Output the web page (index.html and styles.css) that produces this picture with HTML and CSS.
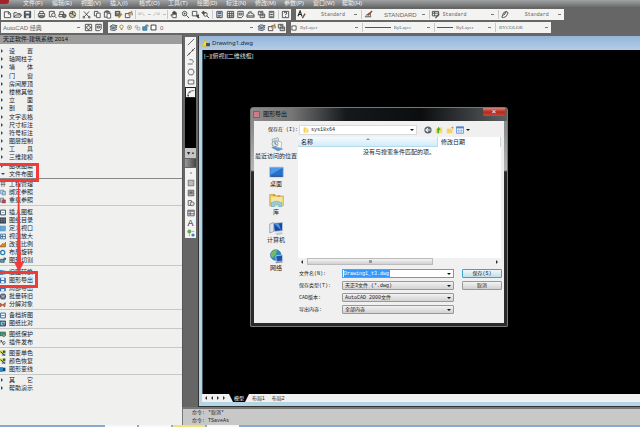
FILE: index.html
```
<!DOCTYPE html>
<html lang="zh-CN">
<head>
<meta charset="utf-8">
<title>天正软件-建筑系统 2014</title>
<link rel="stylesheet" href="styles.css">
</head>
<body>
<svg class="sprites" aria-hidden="true">
  <symbol id="new" viewBox="0 0 10 10"><path d="M1.5 2h5l2 2v4.500h-7zM6 2v2.500h2.500" class="k"/></symbol>
  <symbol id="open" viewBox="0 0 10 10"><path d="M1 8V3h3l1 1h3v1.500M1 8l2-2.500h6.500L8 8z" class="k"/></symbol>
  <symbol id="save" viewBox="0 0 10 10"><path d="M1.500 1.500h7v7h-7z" fill="#4c5a66" stroke="#38434c"/><path d="M3 2h4v2H3zM3.500 6h3v2.500h-3z" fill="#f4f4f4"/></symbol>
  <symbol id="print" viewBox="0 0 10 10"><path d="M3 4V1.500h4V4M1.500 4h7v3.500h-7zM3 6h4v2.500H3z" class="k"/></symbol>
  <symbol id="preview" viewBox="0 0 10 10"><path d="M7 3.500V1.500H1.500v6H4" class="k"/><circle cx="6" cy="5.500" r="2" class="k"/><path d="M7.500 7l2 2" class="k"/></symbol>
  <symbol id="publish" viewBox="0 0 10 10"><path d="M2 5V2h4v3M1 5h6v2.500H1z" class="k"/><circle cx="7" cy="6.500" r="2" fill="#6f7a80" stroke="#444"/></symbol>
  <symbol id="globe" viewBox="0 0 10 10"><circle cx="5" cy="5" r="3.500" fill="#d8c79a" stroke="#555"/><path d="M5 1.500V5l3 1.500M2 4h3" class="k"/></symbol>
  <symbol id="cut" viewBox="0 0 10 10"><path d="M2 1.500l5.500 6M8 1.500l-5.500 6" class="k"/><circle cx="2" cy="8" r="1" class="k"/><circle cx="8" cy="8" r="1" class="k"/></symbol>
  <symbol id="copy" viewBox="0 0 10 10"><path d="M1.500 1.500h4v5h-4z" class="k"/><path d="M4 3.500h4v5H4z" fill="#fff" stroke="#555"/></symbol>
  <symbol id="paste" viewBox="0 0 10 10"><path d="M1.500 2h6v6h-6zM3 1h3v1.500H3z" class="k"/><path d="M4.500 4h4v5h-4z" fill="#fff" stroke="#555"/></symbol>
  <symbol id="match" viewBox="0 0 10 10"><path d="M1.500 1.500h5v5h-5z" fill="#777" stroke="#444"/><path d="M3 3h2M9 3L5 8" stroke="#eee"/><path d="M8.500 4L5 8.500" stroke="#b07b33" stroke-width="2"/></symbol>
  <symbol id="block" viewBox="0 0 10 10"><path d="M1.500 4h5v4.500h-5zM5 3h4v3" class="k"/><path d="M9 1L5 6" stroke="#c98c43" stroke-width="1.500"/></symbol>
  <symbol id="undo" viewBox="0 0 10 10"><path d="M2 5c2-3 6-2 6 2M2 2.500V5h3" fill="none" stroke="#c4c4c4"/></symbol>
  <symbol id="redo" viewBox="0 0 10 10"><path d="M8 5C6 2 2 3 2 7M8 2.500V5H5" fill="none" stroke="#c4c4c4"/></symbol>
  <symbol id="pan" viewBox="0 0 10 10"><path d="M3 8.500L1 5.500l1-.5 1 1V2.500h1V5 1.500h1V5 2h1v3-2h1v4L7 8.500z" class="k"/></symbol>
  <symbol id="zoom" viewBox="0 0 10 10"><circle cx="4" cy="4" r="2.500" class="k"/><path d="M6 6l3 3M4 3v2M3 4h2" class="k"/></symbol>
  <symbol id="zoomwin" viewBox="0 0 10 10"><path d="M1.500 1.500h5v5h-5z" class="k"/><path d="M6 6l3 3M8 5v2" stroke="#333" stroke-width="1.500"/></symbol>
  <symbol id="zoomprev" viewBox="0 0 10 10"><circle cx="5" cy="5" r="2" class="k"/><path d="M6.500 6.500L9 9M1 3l2-2v4zM3 3h3" fill="#555" stroke="#444"/></symbol>
  <symbol id="props" viewBox="0 0 10 10"><path d="M2 1.500h6v7H2z" fill="#dbe6f0" stroke="#445"/><path d="M3 2.500h4v2H3z" fill="#40668e"/><path d="M3 6h4M3 7.500h3" stroke="#555"/></symbol>
  <symbol id="grid" viewBox="0 0 10 10"><path d="M1.500 1.500h7v7h-7zM1.500 4h7M1.500 6.500h7M4 1.500v7M6.500 1.500v7" class="k"/></symbol>
  <symbol id="palette" viewBox="0 0 10 10"><path d="M2 1.500h6v5l-2 2H2zM3.500 3.500h3v2h-3z" class="k"/></symbol>
  <symbol id="sheets" viewBox="0 0 10 10"><path d="M1 5l4-2 4 2v3H1zM2 3l3-1.500L7 3M1 6.500h8" class="k"/></symbol>
  <symbol id="markup" viewBox="0 0 10 10"><path d="M1.500 1.500h5v4h-5zM3.500 4.500h5v4h-5zM3 3h3M5 6.500h3" class="k"/></symbol>
  <symbol id="calc" viewBox="0 0 10 10"><path d="M2.500 1.500h5v7h-5zM3.500 3h3M3.500 5h3M3.500 7h3" class="k"/></symbol>
  <symbol id="help" viewBox="0 0 10 10"><path d="M1.500 1.500h7v7h-7z" class="k"/><path d="M3.500 3.500c0-1.500 3-1.500 3 0 0 1-1.500 1-1.500 2M5 6.500v1" fill="none" stroke="#222"/></symbol>
  <symbol id="textstyle" viewBox="0 0 10 10"><path d="M1 7L3.500 1l2 6M2 5h3" fill="none" stroke="#222" stroke-width="1.200"/><path d="M9 4L6 9" stroke="#7b4a2c" stroke-width="1.500"/></symbol>
  <symbol id="dimstyle" viewBox="0 0 10 10"><path d="M1 7.500h7M2 6l5-3v4" class="k"/><path d="M9 1L4 6" stroke="#8c4b2e" stroke-width="1.500"/></symbol>
  <symbol id="tablestyle" viewBox="0 0 10 10"><path d="M1.500 1.500h7v5h-7zM1.500 3.500h7M4 1.500v5" class="k"/><path d="M9 4L5 9" stroke="#665a3c" stroke-width="1.500"/></symbol>
  <symbol id="leader" viewBox="0 0 10 10"><path d="M2 8l2-5 3-1.500L9 3 7 7 4 8.500z" class="k"/><path d="M4 6l3-4" stroke="#222"/></symbol>
  <symbol id="gear" viewBox="0 0 10 10"><path d="M1.500 1.500h7v7h-7z" class="k"/><circle cx="5" cy="5" r="2" class="k"/><path d="M5 2v1M5 7v1M2 5h1M7 5h1" class="k"/></symbol>
  <symbol id="layers" viewBox="0 0 10 10"><path d="M1 4l3-2 5 1-3 2zM1 5.500l5 1 3-2M1 7.500l5 1 3-2" fill="#b9c4cc" stroke="#475665"/></symbol>
  <symbol id="bulb" viewBox="0 0 10 10"><circle cx="5" cy="4" r="2.500" fill="#fff3b0" stroke="#8b7840"/><path d="M4 7h2v1.500H4z" fill="#777"/></symbol>
  <symbol id="sun" viewBox="0 0 10 10"><circle cx="5" cy="5" r="3" fill="#ddd9c8" stroke="#8a8678"/><circle cx="5" cy="5" r="1" fill="#777"/></symbol>
  <symbol id="freeze" viewBox="0 0 10 10"><circle cx="3.500" cy="4" r="2" fill="#ddd" stroke="#999"/><path d="M4.500 5h4v3.500h-4z" fill="#eee" stroke="#999"/></symbol>
  <symbol id="lock" viewBox="0 0 10 10"><path d="M1 4h6v5H1z" fill="#4598c4" stroke="#2d6d91"/><path d="M5.500 4V1.500h3V4" fill="none" stroke="#333"/></symbol>
  <symbol id="swatch" viewBox="0 0 10 10"><path d="M1.500 1.500h7v7h-7z" fill="#fff" stroke="#333" stroke-width="1.300"/></symbol>
  <symbol id="line" viewBox="0 0 10 10"><path d="M1 9l8-8" class="k"/></symbol>
  <symbol id="xline" viewBox="0 0 10 10"><path d="M0 10L10 0" class="k"/><circle cx="3" cy="7" r="1" fill="#444"/><circle cx="7" cy="3" r="1" fill="#444"/></symbol>
  <symbol id="pline" viewBox="0 0 10 10"><path d="M3 2c5 0 6 2 4 4M1 7.500h6" class="k"/></symbol>
  <symbol id="polygon" viewBox="0 0 10 10"><path d="M3 1.500h4L9 5 7 8.500H3L1 5z" class="k"/></symbol>
  <symbol id="rect" viewBox="0 0 10 10"><path d="M1.500 2.500h7v5h-7z" class="k"/></symbol>
  <symbol id="arc" viewBox="0 0 10 10"><path d="M1 9c0-5 3-7 8-7" class="k"/><circle cx="3.500" cy="4" r="1" fill="#444"/><circle cx="1.500" cy="8.500" r="1" fill="#444"/></symbol>
  <symbol id="point" viewBox="0 0 10 10"><circle cx="5" cy="5" r="1" fill="#666"/></symbol>
  <symbol id="hatch" viewBox="0 0 10 10"><path d="M1.500 1.500h7v7h-7z" fill="#ccc" stroke="#666"/><path d="M2 5l3-3M2 8l6-6M5 8l3-3" stroke="#888" stroke-width=".7"/></symbol>
  <symbol id="gradient" viewBox="0 0 10 10"><path d="M1.500 1.500h7v7h-7z" fill="#aaa" stroke="#555"/><path d="M3 3h4v3H3z" fill="#666"/></symbol>
  <symbol id="region" viewBox="0 0 10 10"><path d="M1.500 2h4v6h-4z" class="k"/><circle cx="6.500" cy="6" r="2.500" fill="#ddd" stroke="#555"/></symbol>
  <symbol id="table" viewBox="0 0 10 10"><path d="M1 1.500h8v7H1zM1 6h8M4 3v5" class="k"/><path d="M1 1.500h8v2H1z" fill="#777"/></symbol>
  <symbol id="addsel" viewBox="0 0 10 10"><circle cx="3" cy="3" r="2.500" fill="#68a654"/><circle cx="7.500" cy="7.500" r="2" fill="#3b84b7"/><path d="M3 5v4M6 3h3" stroke="#999"/></symbol>
  <symbol id="i-project" viewBox="0 0 10 10"><path d="M1 2h8M3 2v7M7 2v7M1 5h8" class="k"/></symbol>
  <symbol id="i-bind" viewBox="0 0 10 10"><path d="M1 1h5v6H1z" fill="#dceaf8" stroke="#3a70a8"/><path d="M4 3h5v6H4z" fill="#b5d0ea" stroke="#3a70a8"/></symbol>
  <symbol id="i-reload" viewBox="0 0 10 10"><path d="M1 1h5v7H1z" fill="#c7cfd8" stroke="#456"/><path d="M4 4h5v5H4z" fill="#c84a4a" stroke="#833"/></symbol>
  <symbol id="i-frame" viewBox="0 0 10 10"><path d="M1 1h8v8H1z" fill="#fff" stroke="#223f5a" stroke-width="1.500"/><path d="M4 5h2" stroke="#222"/></symbol>
  <symbol id="i-index" viewBox="0 0 10 10"><path d="M0 0h10v10H0z" fill="#2b3947"/><path d="M0 3h10M0 6h10M3 0v10M7 0v10" stroke="#7b8792"/></symbol>
  <symbol id="i-view" viewBox="0 0 10 10"><path d="M0 1h9v8H0z" fill="#68a8d8" stroke="#4388bd"/></symbol>
  <symbol id="i-enlarge" viewBox="0 0 10 10"><path d="M1 1h3v8H1zM5 1h4v8H5M1 5h8" fill="none" stroke="#285b88" stroke-width="1.300"/></symbol>
  <symbol id="i-scale" viewBox="0 0 10 10"><path d="M0 8l5-5 1 2 4-4-1 8H0z" fill="#dc8c25" stroke="#7a5126"/></symbol>
  <symbol id="i-rotate" viewBox="0 0 10 10"><circle cx="4.500" cy="5" r="3.500" fill="none" stroke="#217caf" stroke-width="2"/></symbol>
  <symbol id="i-trim" viewBox="0 0 10 10"><path d="M1 3h6v5H1z" fill="#5bb3d4" stroke="#123"/><path d="M5 5l4-4M6 1h3v3" fill="none" stroke="#145" stroke-width="1.500"/></symbol>
  <symbol id="i-disk" viewBox="0 0 10 10"><path d="M0 1h9v8H0z" fill="#3e77c0" stroke="#2c5186"/><path d="M2 1h5v3H2zM2 6h5v3H2z" fill="#e9f2fc"/></symbol>
  <symbol id="i-batch" viewBox="0 0 10 10"><rect x="1" y="1" width="8" height="8" rx="2" fill="#a9b2c5" stroke="#253755" stroke-width="1.500"/><path d="M3 4h4v3H3z" fill="#fff" stroke="#334"/></symbol>
  <symbol id="i-explode" viewBox="0 0 10 10"><path d="M0 3l4 2-3 4zM4 6l5-4-1 7z" fill="#d66f34" stroke="#883e26"/></symbol>
  <symbol id="i-split" viewBox="0 0 10 10"><path d="M1 1h8v8H1z" fill="#fff" stroke="#245b94" stroke-width="1.500"/><path d="M2 5h6" stroke="#4c9cd8" stroke-width="2"/></symbol>
  <symbol id="i-compare" viewBox="0 0 10 10"><path d="M0 1h9v8H0z" fill="#6ccad8" stroke="#172d56" stroke-width="1.500"/><path d="M4 4l4 4" stroke="#a23948" stroke-width="2"/></symbol>
  <symbol id="i-protect" viewBox="0 0 10 10"><path d="M0 1h9v6H0z" fill="#4b9b84" stroke="#245"/><path d="M4 4h5v3L6 9 4 7z" fill="#75b93f" stroke="#365"/></symbol>
  <symbol id="i-plugin" viewBox="0 0 10 10"><path d="M1 1l3 4 4-2M4 5l2 4 3-4M1 5l2-4" fill="none" stroke="#333" stroke-width="1.300"/></symbol>
  <symbol id="i-color" viewBox="0 0 10 10"><path d="M0 0h5v5H0z" fill="#d8d83f"/><path d="M5 0h4v4H5z" fill="#285c32"/><path d="M3 5h6v4H3z" fill="#7897c5"/><path d="M1 2l7 6" stroke="#234" stroke-width="1.500"/></symbol>
  <symbol id="i-wire" viewBox="0 0 10 10"><path d="M0 1h5v8H0z" fill="#298ac2"/><path d="M5 2h4v6H5z" fill="#174272"/></symbol>
  <symbol id="p-recent" viewBox="0 0 20 20"><path d="M3 14l6-3 10 5-7 3z" fill="#5a98c8"/><path d="M4 3l8-2 2 9-8 3z" fill="#d9e4e8" stroke="#94a5ad"/><path d="M9 5l8 2-1 8-8-2z" fill="#f7fafb" stroke="#a2afb5"/><circle cx="8" cy="9" r="4" fill="#dce8ed" stroke="#83949c"/><path d="M8 6v3l2 1" class="k"/></symbol>
  <symbol id="p-desktop" viewBox="0 0 20 20"><path d="M1 3h18v13H1z" fill="#2470cd" stroke="#a8bfd5"/><path d="M2 4h16L2 13z" fill="#5097e6"/><path d="M2 15h16" stroke="#173c73"/></symbol>
  <symbol id="p-library" viewBox="0 0 20 20"><path d="M1 2h7l1 2h10v13H1z" fill="#e7cb68" stroke="#c2a349"/><path d="M3 5h15v12H3z" fill="#f7e69a"/><path d="M5 3h3M11 4h4" stroke="#d45d35"/><path d="M3 18v-5q7-4 14 0v5h-4v-3H7v3z" fill="#9bd1df" stroke="#68adc4"/></symbol>
  <symbol id="p-computer" viewBox="0 0 20 20"><path d="M1 4l5-2v12l-5 2z" fill="#dfe5ea" stroke="#8597a4"/><path d="M6 3l12-1v11l-11 1z" fill="#1747a5" stroke="#c3cdd6"/><path d="M7 4l6-1 3 9z" fill="#4c92df"/><path d="M8 16l9-1 2 2-8 2z" fill="#bdc8d0"/></symbol>
  <symbol id="p-network" viewBox="0 0 20 20"><circle cx="9" cy="8" r="7" fill="#278bc5" stroke="#347499"/><path d="M3 5q4-5 8-3l-2 5-4 5-3-3z" fill="#76bc58"/><path d="M9 9l9-1v8l-8 1z" fill="#1b53af" stroke="#c7d6df"/><path d="M9 18l9-1" stroke="#83949e" stroke-width="2"/></symbol>
  <symbol id="folder" viewBox="0 0 10 10"><path d="M1 1h4l1 2h3v6H1z" fill="#f0ca4c"/><path d="M3 3h5v6H3z" fill="#f9e486"/></symbol>
  <symbol id="back" viewBox="0 0 10 10"><circle cx="5" cy="5" r="4.500" fill="#5a6470"/><path d="M5 2.500L2.500 5 5 7.500M3 5h5" fill="none" stroke="#fff" stroke-width="1.300"/></symbol>
  <symbol id="up" viewBox="0 0 10 10"><path d="M1 3h3l1-1h4v7H1z" fill="#efdc6a"/><path d="M3 9h2V5h2L4.500 1 2 5h1z" fill="#3fae32"/></symbol>
  <symbol id="newfolder" viewBox="0 0 10 10"><path d="M1 3h4l1 1h2v5H1z" fill="#f5d364"/><path d="M8 0l.6 1.600L10 2l-1.400.7L8 4l-.6-1.300L6 2l1.400-.4z" fill="#f08a28"/></symbol>
  <symbol id="views" viewBox="0 0 10 10"><path d="M.5 1h9v8h-9z" fill="#fff" stroke="#4b82c9"/><path d="M.5 1h9v2h-9z" fill="#4b82c9"/><path d="M3.500 3v6M6.500 3v6M1 6h8" stroke="#88addb"/></symbol>
  <symbol id="dwg" viewBox="0 0 10 10"><path d="M0 9l4-8 4 8z" fill="#f6dc34" stroke="#d8b92c"/><path d="M5 5h5v4H5z" fill="#31567c"/></symbol>
</svg>

<header>
  <nav class="menubar">
    <span class="logo"></span>
    <a href="#">文件(F)</a><a href="#">编辑(E)</a><a href="#">视图(V)</a><a href="#">插入(I)</a><a href="#">格式(O)</a><a href="#">工具(T)</a><a href="#">绘图(D)</a><a href="#">标注(N)</a><a href="#">修改(M)</a><a href="#">参数(P)</a><a href="#">窗口(W)</a><a href="#">帮助(H)</a>
  </nav>
  <div class="toolrow">
    <div class="bar standard">
      <button aria-label="新建"><svg><use href="#new"/></svg></button><button aria-label="打开"><svg><use href="#open"/></svg></button><button aria-label="保存"><svg><use href="#save"/></svg></button><i></i>
      <button aria-label="打印"><svg><use href="#print"/></svg></button><button aria-label="预览"><svg><use href="#preview"/></svg></button><button aria-label="发布"><svg><use href="#publish"/></svg></button><button aria-label="三维"><svg><use href="#globe"/></svg></button><i></i>
      <button aria-label="剪切"><svg><use href="#cut"/></svg></button><button aria-label="复制"><svg><use href="#copy"/></svg></button><button aria-label="粘贴"><svg><use href="#paste"/></svg></button><button aria-label="特性匹配"><svg><use href="#match"/></svg></button><button aria-label="块编辑"><svg><use href="#block"/></svg></button><i></i>
      <button aria-label="放弃" class="drop"><svg><use href="#undo"/></svg></button><button aria-label="重做" class="drop"><svg><use href="#redo"/></svg></button><i></i>
      <button aria-label="平移"><svg><use href="#pan"/></svg></button><button aria-label="缩放"><svg><use href="#zoom"/></svg></button><button aria-label="窗口缩放"><svg><use href="#zoomwin"/></svg></button><button aria-label="上一个"><svg><use href="#zoomprev"/></svg></button><i></i>
      <button aria-label="特性"><svg><use href="#props"/></svg></button><button aria-label="设计中心"><svg><use href="#grid"/></svg></button><button aria-label="工具选项板"><svg><use href="#palette"/></svg></button><button aria-label="图纸集"><svg><use href="#sheets"/></svg></button><button aria-label="标记集"><svg><use href="#markup"/></svg></button><button aria-label="计算器"><svg><use href="#calc"/></svg></button><i></i>
      <button aria-label="帮助"><svg><use href="#help"/></svg></button>
    </div>
    <div class="bar styles">
      <button aria-label="文字样式管理"><svg><use href="#textstyle"/></svg></button><select aria-label="文字样式" class="mono"><option>Standard</option></select><i></i>
      <button aria-label="标注样式管理"><svg><use href="#dimstyle"/></svg></button><select aria-label="标注样式"><option>STANDARD</option></select><i></i>
      <button aria-label="表格样式管理"><svg><use href="#tablestyle"/></svg></button><select aria-label="表格样式" class="mono near"><option>Standard</option></select><i></i>
      <button aria-label="引线样式管理"><svg><use href="#leader"/></svg></button><select aria-label="引线样式" class="mono"><option>Standard</option></select>
    </div>
  </div>
  <div class="toolrow">
    <div class="bar space"><select aria-label="工作空间" class="near"><option>AutoCAD 经典</option></select><button aria-label="工作空间设置"><svg><use href="#gear"/></svg></button><button aria-label="我的工作空间"><svg><use href="#palette"/></svg></button></div>
    <div class="bar layer">
      <button aria-label="图层特性"><svg><use href="#layers"/></svg></button>
      <div class="state"><svg><use href="#bulb"/></svg><svg><use href="#sun"/></svg><svg><use href="#freeze"/></svg><svg><use href="#lock"/></svg><svg><use href="#swatch"/></svg><select aria-label="图层" class="near"><option>0</option></select></div>
      <button aria-label="置为当前"><svg><use href="#layers"/></svg></button><button aria-label="上一个图层"><svg><use href="#block"/></svg></button><button aria-label="图层状态"><svg><use href="#markup"/></svg></button>
    </div>
    <div class="bar traits">
      <div class="state color"><svg><use href="#swatch"/></svg><select aria-label="颜色" class="serif near"><option>ByLayer</option></select></div><i></i>
      <div class="state ltype"><b></b><select aria-label="线型" class="serif near"><option>ByLayer</option></select></div><i></i>
      <div class="state weight"><b></b><select aria-label="线宽" class="serif near"><option>ByLayer</option></select></div><i></i>
      <select aria-label="打印样式" class="serif near"><option>BYCOLOR</option></select>
    </div>
  </div>
</header>

<main>
  <aside class="panel">
    <h1>天正软件-建筑系统 2014</h1>
    <ul class="group top">
      <li class="sub">设　　置</li><li class="sub">轴网柱子</li><li class="sub">墙　　体</li><li class="sub">门　　窗</li><li class="sub">房间屋顶</li><li class="sub">楼梯其他</li><li class="sub">立　　面</li><li class="sub">剖　　面</li><li class="sub">文字表格</li><li class="sub">尺寸标注</li><li class="sub">符号标注</li><li class="sub">图层控制</li><li class="sub">工　　具</li><li class="sub">三维建模</li><li class="sub">图块图案</li><li class="sub expanded">文件布图</li>
    </ul>
    <ul class="group"><li><svg><use href="#i-project"/></svg>工程管理</li><li><svg><use href="#i-bind"/></svg>绑定参照</li><li><svg><use href="#i-reload"/></svg>重载参照</li></ul>
    <ul class="group roomy"><li><svg><use href="#i-frame"/></svg>插入图框</li><li><svg><use href="#i-index"/></svg>图纸目录</li><li><svg><use href="#i-view"/></svg>定义视口</li><li><svg><use href="#i-enlarge"/></svg>视口放大</li><li><svg><use href="#i-scale"/></svg>改变比例</li><li><svg><use href="#i-rotate"/></svg>布局旋转</li><li><svg><use href="#i-trim"/></svg>图形切割</li></ul>
    <ul class="group roomy"><li><svg><use href="#i-wire"/></svg>旧图转换</li><li><svg><use href="#i-disk"/></svg>图形导出</li><li><svg><use href="#i-disk"/></svg>局部导出</li><li><svg><use href="#i-batch"/></svg>批量转旧</li><li><svg><use href="#i-explode"/></svg>分解对象</li></ul>
    <ul class="group"><li><svg><use href="#i-split"/></svg>备档拆图</li><li><svg><use href="#i-compare"/></svg>图纸比对</li></ul>
    <ul class="group"><li><svg><use href="#i-protect"/></svg>图纸保护</li><li><svg><use href="#i-plugin"/></svg>插件发布</li></ul>
    <ul class="group"><li><svg><use href="#i-color"/></svg>图变单色</li><li><svg><use href="#i-color"/></svg>颜色恢复</li><li><svg><use href="#i-wire"/></svg>图形变线</li></ul>
    <ul class="group last"><li class="sub">其　　它</li><li class="sub">帮助演示</li></ul>
    <div class="mark first"></div>
    <svg class="arrow" viewBox="0 0 10 90"><path d="M4 0h1l2 80h3l-5 10-5-10h3z" fill="#f23b38"/></svg>
    <div class="mark second"></div>
  </aside>

  <div class="right">
    <div class="upper">
      <div class="palette">
        <div class="tools draw">
          <button aria-label="直线"><svg><use href="#line"/></svg></button><button aria-label="构造线"><svg><use href="#xline"/></svg></button><button aria-label="多段线"><svg><use href="#pline"/></svg></button><button aria-label="多边形"><svg><use href="#polygon"/></svg></button><button aria-label="矩形"><svg><use href="#rect"/></svg></button><button aria-label="圆弧" class="active"><svg><use href="#arc"/></svg></button>
        </div>
        <div class="void"></div>
        <div class="more">▾ ▪</div>
        <div class="grip"></div>
        <div class="tools">
          <button aria-label="点"><svg><use href="#point"/></svg></button><button aria-label="图案填充"><svg><use href="#hatch"/></svg></button><button aria-label="渐变色"><svg><use href="#gradient"/></svg></button><button aria-label="面域"><svg><use href="#region"/></svg></button><button aria-label="表格"><svg><use href="#table"/></svg></button><button class="letter">A</button><button aria-label="添加选定对象"><svg><use href="#addsel"/></svg></button>
        </div>
      </div>
      <section class="drawing">
        <h2><svg><use href="#dwg"/></svg>Drawing1.dwg</h2>
        <div class="canvas">
          <p class="viewlabel">[−][俯视][二维线框]</p>
          <form class="dialog">
            <div class="caption"><span class="app"></span><span class="name">图形导出</span><button type="button" aria-label="关闭">×</button></div>
            <div class="body">
              <div class="lookin">
                <label for="dir">保存在 (I):</label>
                <div class="combo"><svg><use href="#folder"/></svg><select id="dir"><option>sys18x64</option></select></div>
                <button type="button" aria-label="后退"><svg><use href="#back"/></svg></button><button type="button" aria-label="向上"><svg><use href="#up"/></svg></button><button type="button" aria-label="新建文件夹"><svg><use href="#newfolder"/></svg></button><button type="button" aria-label="视图" class="views"><svg><use href="#views"/></svg></button>
              </div>
              <div class="columns">
                <nav class="places">
                  <a href="#"><svg><use href="#p-recent"/></svg>最近访问的位置</a><a href="#"><svg><use href="#p-desktop"/></svg>桌面</a><a href="#"><svg><use href="#p-library"/></svg>库</a><a href="#"><svg><use href="#p-computer"/></svg>计算机</a><a href="#"><svg><use href="#p-network"/></svg>网络</a>
                </nav>
                <div class="content">
                  <div class="files">
                    <table><thead><tr><th class="sorted">名称</th><th>修改日期</th></tr></thead><tbody><tr><td>没有与搜索条件匹配的项。</td><td></td></tr></tbody></table>
                    <div class="scroll"><span class="al"></span><span class="thumb"></span><span class="ar"></span></div>
                  </div>
                  <div class="fields">
                    <label for="fn">文件名(N):</label><div class="filename"><input id="fn" value="Drawing1_t3.dwg"></div><button type="submit" class="primary">保存(S)</button>
                    <label for="ty">保存类型(T):</label><select id="ty"><option>天正3文件 (*.dwg)</option></select><button type="button">取消</button>
                    <label for="ve">CAD版本:</label><select id="ve"><option>AutoCAD 2000文件</option></select><span></span>
                    <label for="co">导出内容:</label><select id="co"><option>全部内容</option></select><span></span>
                  </div>
                </div>
              </div>
            </div>
          </form>
        </div>
        <div class="tabs"><span class="nav al"></span><span class="nav al"></span><span class="nav ar"></span><span class="nav ar"></span><a href="#" class="current">模型</a><a href="#">布局1</a><a href="#">布局2</a></div>
      </section>
    </div>
    <div class="command"><p>命令: *取消*</p><p>命令: TSaveAs</p></div>
  </div>
</main>
<footer><span></span><span></span><span class="lit"></span><span></span></footer>
</body>
</html>
```

FILE: styles.css
```
* { box-sizing: border-box; }
body {
  margin: 0;
  height: 100vh;
  display: flex;
  flex-direction: column;
  overflow: hidden;
  background: #666;
  color: #222;
  font: 6px/8px "Liberation Sans", "Noto Sans CJK SC", sans-serif;
}
.sprites { position: absolute; width: 0; height: 0; }
.k { fill: none; stroke: #4a4a4a; }
svg { display: block; width: 9px; height: 9px; flex: none; }
a { color: inherit; text-decoration: none; }
h1, h2, p, ul { margin: 0; padding: 0; font-size: 6px; font-weight: normal; }
button, select, input { font: inherit; color: inherit; margin: 0; padding: 0; border: 0; border-radius: 0; background: none; min-width: 0; }
button { display: flex; align-items: center; justify-content: center; }
select {
  appearance: none;
  background: linear-gradient(#777, #777) right 3px center / 3px 1px no-repeat;
}
.mono { font: 5px/8px "Liberation Mono", monospace; }
.serif { font: 5px/8px "Liberation Serif", serif; }

/* menu and toolbars */
header { flex: none; height: 35px; display: flex; flex-direction: column; gap: 2px; }
.menubar {
  height: 7px;
  display: flex;
  padding-left: 23px;
  position: relative;
  background: linear-gradient(#a0a2a3, #6c6c6c);
  color: #f4f4f4;
  line-height: 7px;
}
.menubar a { width: 29px; white-space: nowrap; }
.logo { position: absolute; left: 0; top: 0; width: 9px; height: 4px; background: #a3232b; border-radius: 0 0 3px 0; }
.toolrow { display: flex; gap: 5px; height: 11px; padding-left: 1px; }
.bar { display: flex; align-items: center; background: #f3f3f2; height: 11px; color: #666; }
.bar i { width: 1px; height: 9px; background: #c9c9c9; margin: 0 1px; }
.bar > button { width: 10px; height: 10px; flex: none; }
.bar > select { text-align: center; flex: 1; height: 10px; }
.bar select.near { text-align: left; padding-left: 2px; }
.standard { width: 290px; padding-left: 1px; justify-content: space-between; }
.bar > button.drop { width: 14px; justify-content: space-between; }
.drop::after { content: ""; width: 3px; height: 1px; background: #bbb; }
.styles { width: 268px; }
.space { width: 102px; }
.layer { width: 178px; }
.traits { width: 260px; }
.state { display: flex; align-items: center; gap: 1px; flex: 1; }
.layer .state svg { width: 7px; height: 7px; }
.state select { flex: 1; }
.state b { height: 1px; background: #555; margin-left: 1px; }
.color svg { width: 6px; height: 6px; }
.ltype b { width: 26px; }
.weight b { width: 16px; }
.weight { flex: 0 0 58px; }
.traits > select { flex: 0 0 54px; }

/* side panel */
main { flex: 1; min-height: 0; display: flex; }
.panel { position: relative; flex: none; width: 182px; background: #f0f0ef; }
.panel h1 { height: 9px; line-height: 9px; padding-left: 3px; margin-bottom: 3px; background: #9c9c9c; color: #111; }
.group { list-style: none; padding: 1px 0; border-bottom: 1px solid #c5c9c6; }
.group.top { height: 132px; padding: 0; display: flex; flex-direction: column; justify-content: space-between; border-color: #888; }
.roomy { padding-top: 2px; }
.panel .last { border: 0; }
.group li { display: flex; align-items: center; gap: 3px; height: 8px; white-space: nowrap; }
.group svg { width: 6px; height: 7px; }
.group .sub { gap: 0; }
.sub::before { content: ""; width: 0; height: 0; border: 2px solid transparent; border-left-color: #26506e; border-right: 0; margin: 0 6px 0 1px; }
.sub.expanded::before { border: 2px solid transparent; border-top-color: #26506e; border-bottom: 0; margin-right: 4px; }
.mark { position: absolute; left: -3px; width: 42px; border: 3px solid #f23b38; }
.mark.first { top: 128px; height: 19px; }
.mark.second { top: 236px; height: 17px; width: 41px; }
.arrow { position: absolute; left: 14px; top: 147px; width: 10px; height: 90px; }

/* draw toolbar */
.right { flex: 1; min-width: 0; display: flex; flex-direction: column; }
.upper { flex: 1; min-height: 0; display: flex; }
.palette { width: 16px; flex: none; padding: 2px 2px 0; border-left: 1px solid #555; }
.tools { background: #f3f3f3; }
.tools button { width: 100%; height: 10px; }
.tools .active { border: 1px solid #222; height: 11px; }
.tools svg { width: 8px; height: 8px; }
.tools .letter { font-size: 9px; color: #222; }
.void { height: 50px; background: #000; }
.more { height: 10px; line-height: 10px; text-align: center; background: #c5c5c5; white-space: nowrap; }
.grip { height: 8px; margin: 1px 0; background: linear-gradient(90deg, #999, #444); }

/* drawing window */
.drawing { flex: 1; min-width: 0; display: flex; flex-direction: column; margin-top: 1px; border-left: 1px solid #333; border-bottom: 1px solid #333; padding: 0 0 4px 3px; background: #b5d5e4; }
.drawing h2 { height: 14px; line-height: 14px; display: flex; align-items: center; gap: 2px; margin-left: -3px; padding-left: 3px; background: linear-gradient(#95b5d8, #b3cce8); color: #17253a; font-family: "Noto Sans", sans-serif; }
.drawing h2 svg { width: 8px; height: 8px; }
.canvas { position: relative; flex: 1; min-height: 0; background: #000; border-left: 1px solid #456; }
.viewlabel { color: #ddd; padding: 2px 1px; }
.tabs { height: 8px; display: flex; align-items: center; background: #f1f1f1; color: #222; padding-left: 3px; font-size: 5px; }
.nav { margin-right: 4px; }
.al, .ar { width: 0; height: 0; border: 2px solid transparent; }
.al { border-right: 2px solid #333; border-left: 0; }
.ar { border-left: 2px solid #333; border-right: 0; }
.tabs a { padding: 0 4px 0 2px; height: 8px; margin-right: 1px; background: linear-gradient(116deg, transparent 49%, #666 49%, #666 51%, transparent 51%) right / 5px 8px no-repeat; }
.tabs .current { background: #000; color: #fff; padding: 0 5px; clip-path: polygon(0 0, 100% 0, 16px 100%, 4px 100%); }
.command { height: 18px; flex: none; border-top: 2px solid #777; background: #c8c8c8; padding-left: 9px; font: 5px/8px "Liberation Mono", "Noto Sans CJK SC", monospace; border-left: 1px solid #777; }
.command p { font-size: 5px; line-height: 8px; }
footer { height: 2px; flex: none; display: flex; gap: 2px; background: #86a9cc; padding-left: 105px; }
footer span { width: 32px; background: #f5f7fa; }
footer .lit { background: #f0e27c; }

/* export dialog */
.dialog {
  position: absolute;
  left: 47px;
  top: 57px;
  width: 258px;
  border: 1px solid #777;
  border-radius: 3px 3px 1px 1px;
  padding: 0 3px 3px;
  background: linear-gradient(#8d8d8d 20px, #b5b5b5 62px, #2a2a2a 64px, #2a2a2a);
  font: 5px/8px "Liberation Mono", "Noto Sans CJK SC", monospace;
}
.caption { display: flex; align-items: center; gap: 3px; height: 13px; margin: 0 -3px; padding-left: 2px; border-radius: 2px 2px 0 0; background: linear-gradient(90deg, #8c8c8c, #777 40px, #15191c 95px, #0b0d0e 170px, #5d6163); }
.app { width: 7px; height: 7px; background: #cf7b88; border: 1px solid #a84e5c; }
.caption .name { flex: 1; font-size: 6px; color: #111; }
.caption button { align-self: flex-start; width: 22px; height: 8px; margin-right: 2px; border-radius: 0 0 2px 2px; background: linear-gradient(#d98478, #b5281b 50%, #c84a38); color: #fff; font-size: 8px; }
.body { background: #f0f0f0; height: 202px; padding: 4px 3px 0 0; display: flex; flex-direction: column; }
.lookin { display: flex; align-items: center; height: 10px; gap: 2px; margin-bottom: 2px; }
.lookin label { width: 43px; padding-left: 14px; white-space: nowrap; }
.lookin button { width: 9px; height: 9px; }
.lookin button svg { width: 8px; height: 8px; }
.combo, .filename { display: flex; align-items: center; background: #fff; border: 1px solid #d5dade; height: 10px; }
.combo { width: 118px; margin-right: 4px; padding-left: 3px; gap: 2px; }
.combo svg { width: 6px; height: 6px; }
.combo select { flex: 1; height: 8px; background: none; }
.combo::after, .filename::after, .views::after { content: ""; border: 2px solid transparent; border-top-color: #111; border-bottom: 0; margin: 0 2px; }
.lookin .views { width: 15px; }
.columns { flex: 1; display: flex; min-height: 0; }
.places { width: 44px; flex: none; display: flex; flex-direction: column; }
.places a { display: flex; flex-direction: column; align-items: center; height: 28px; gap: 1px; font-size: 6px; white-space: nowrap; }
.places svg { width: 15px; height: 15px; }
.content { flex: 1; min-width: 0; }
.files { background: #fff; height: 128px; display: flex; flex-direction: column; }
table { width: 100%; flex: 1; border-collapse: collapse; font-family: "Liberation Sans", "Noto Sans CJK SC", sans-serif; font-size: 6px; }
thead, tbody { display: block; }
tr { display: flex; }
th, td { padding: 0 3px; font-weight: normal; text-align: left; height: 10px; line-height: 10px; flex: 1; }
th { border-right: 1px solid #c8d8e2; }
th:first-child, td:first-child { flex: 0 0 140px; }
.sorted { background: linear-gradient(#f3fafe, #d3ebf7); border-bottom: 1px solid #b4dcee; position: relative; }
.sorted::after { content: ""; position: absolute; left: 68px; top: 1px; border: 2px solid transparent; border-top: 0; border-bottom-color: #7799ad; }
td:first-child { text-align: right; white-space: nowrap; }
.scroll { height: 7px; display: flex; align-items: center; background: #f1f1f1; padding: 0 3px; gap: 4px; }
.thumb { width: 126px; height: 7px; border: 1px solid #bbb; background: linear-gradient(#f4f4f4, #cfcfcf); display: flex; justify-content: center; align-items: center; }
.thumb::after { content: ""; width: 3px; height: 3px; background: #999; }
.scroll .ar { margin-left: auto; }
.fields { display: grid; grid-template-columns: 42px 112px 40px; column-gap: 2px; row-gap: 3px; margin-top: 4px; align-items: center; }
.fields label { white-space: nowrap; padding-left: 1px; }
.fields select {
  height: 9px;
  padding-left: 2px;
  border: 1px solid #999;
  border-radius: 1px;
  background: url("data:image/svg+xml,%3Csvg xmlns='http://www.w3.org/2000/svg' width='4' height='2'%3E%3Cpath d='M0 0h4L2 2z' fill='%23111'/%3E%3C/svg%3E") right 2px center no-repeat, linear-gradient(#f2f2f2, #d2d2d2);
}
.fields button { width: 40px; height: 9px; margin-left: 6px; border: 1px solid #999; border-radius: 1px; background: linear-gradient(#f4f4f4, #d0d0d0); }
.fields .primary { border-color: #3aa5c8; background: linear-gradient(#eef8fc, #c3dfec); }
.filename { justify-content: space-between; height: 9px; border-color: #4fa6d8; padding-left: 1px; }
.filename input { width: 46px; height: 7px; background: #3399ff; color: #fff; }
```
